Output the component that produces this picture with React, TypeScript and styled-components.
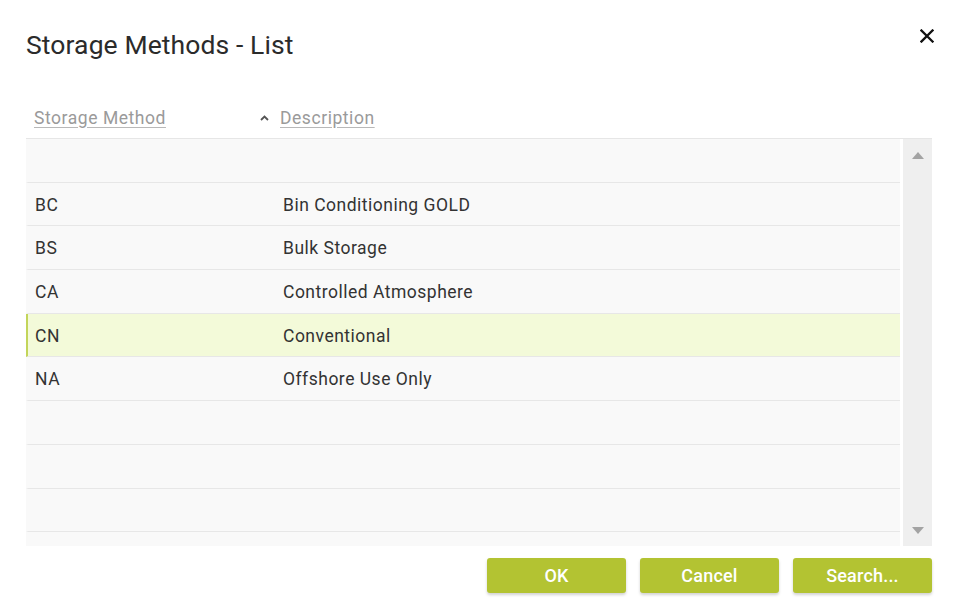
import React from "react";
import styled, { createGlobalStyle } from "styled-components";

const Global = createGlobalStyle`
  html, body { margin: 0; padding: 0; background: #ffffff; }
  body { font-family: Roboto, "Liberation Sans", Arial, sans-serif; }
  * { box-sizing: border-box; }
`;

const Dialog = styled.div`
  width: 958px;
  height: 605px;
  background: #ffffff;
  padding: 0 26px 0 26px;
  display: flex;
  flex-direction: column;
`;

const TitleBar = styled.div`
  display: flex;
  align-items: center;
  justify-content: space-between;
  height: 90px;
`;

const Title = styled.h1`
  margin: 0;
  font-size: 26.5px;
  font-weight: 400;
  color: #2b2b2b;
  letter-spacing: 0.1px;
  line-height: 1;
`;

const CloseButton = styled.button`
  border: none;
  background: none;
  padding: 0;
  width: 16px;
  height: 16px;
  margin-right: -3px;
  margin-top: -18px;
  display: flex;
  align-items: center;
  justify-content: center;
  cursor: pointer;
`;

const HeaderRow = styled.div`
  display: grid;
  grid-template-columns: 224px 1fr;
  align-items: center;
  height: 48px;
  padding-left: 8px;
  padding-top: 7px;
`;

const HeaderCell = styled.div`
  display: flex;
  align-items: center;
  gap: 10px;
`;

const HeaderLink = styled.a`
  font-size: 17.5px;
  letter-spacing: 0.55px;
  color: #9a9a9a;
  text-decoration: underline;
  text-underline-offset: 3px;
  text-decoration-color: #b8b8b8;
  cursor: pointer;
`;

const Caret = styled.span`
  width: 12px;
  display: inline-flex;
  justify-content: center;
`;

const TableWrap = styled.div`
  display: flex;
  border-top: 1px solid #e6e6e6;
  height: 408px;
`;

const Body = styled.div`
  flex: 1;
  overflow: hidden;
  background: #f8f8f8;
  margin-right: 3px;
`;

const Row = styled.div<{ $selected?: boolean }>`
  display: grid;
  grid-template-columns: 248px 1fr;
  align-items: center;
  height: 43.7px;
  border-bottom: 1px solid #e7e7e7;
  background: ${(p) => (p.$selected ? "#f3fad9" : "#f9f9f9")};
  border-left: 2px solid ${(p) => (p.$selected ? "#c3d55a" : "transparent")};
  padding-left: 7px;
  padding-top: 1px;
  font-size: 17.5px;
  letter-spacing: 0.5px;
  color: #333333;
`;

const Cell = styled.div`
  white-space: nowrap;
`;

const Scrollbar = styled.div`
  width: 29px;
  background: #efefef;
  display: flex;
  flex-direction: column;
  justify-content: space-between;
  align-items: center;
  padding: 13px 0 12px;
`;

const Footer = styled.div`
  display: flex;
  justify-content: flex-end;
  gap: 14px;
  padding-top: 12px;
`;

const Button = styled.button`
  width: 139px;
  height: 35px;
  border: none;
  border-radius: 3px;
  background: #b3c332;
  color: #ffffff;
  font-family: Roboto, "Liberation Sans", Arial, sans-serif;
  font-size: 18px;
  letter-spacing: 0.2px;
  font-weight: 500;
  box-shadow: 0 2px 3px rgba(0, 0, 0, 0.18);
  cursor: pointer;
`;

const rows: [string, string][] = [
  ["", ""],
  ["BC", "Bin Conditioning GOLD"],
  ["BS", "Bulk Storage"],
  ["CA", "Controlled Atmosphere"],
  ["CN", "Conventional"],
  ["NA", "Offshore Use Only"],
  ["", ""],
  ["", ""],
  ["", ""],
  ["", ""],
];

export default function App() {
  return (
    <>
      <Global />
      <Dialog>
        <TitleBar>
          <Title>Storage Methods - List</Title>
          <CloseButton aria-label="Close">
            <svg width="14" height="14" viewBox="0 0 14 14">
              <path d="M1.5 1.5 L12.5 12.5 M12.5 1.5 L1.5 12.5" stroke="#111" strokeWidth="2.3" strokeLinecap="square" />
            </svg>
          </CloseButton>
        </TitleBar>
        <HeaderRow>
          <HeaderCell>
            <HeaderLink>Storage Method</HeaderLink>
          </HeaderCell>
          <HeaderCell>
            <Caret>
              <svg width="9" height="6" viewBox="0 0 9 6">
                <path d="M1 5 L4.5 1.5 L8 5" stroke="#555" strokeWidth="1.8" fill="none" />
              </svg>
            </Caret>
            <HeaderLink>Description</HeaderLink>
          </HeaderCell>
        </HeaderRow>
        <TableWrap>
          <Body>
            {rows.map(([code, desc], i) => (
              <Row key={i} $selected={code === "CN"}>
                <Cell>{code}</Cell>
                <Cell>{desc}</Cell>
              </Row>
            ))}
          </Body>
          <Scrollbar>
            <svg width="12" height="7" viewBox="0 0 12 7">
              <path d="M0 7 L6 0 L12 7 Z" fill="#a3a3a3" />
            </svg>
            <svg width="12" height="7" viewBox="0 0 12 7">
              <path d="M0 0 L6 7 L12 0 Z" fill="#a3a3a3" />
            </svg>
          </Scrollbar>
        </TableWrap>
        <Footer>
          <Button>OK</Button>
          <Button>Cancel</Button>
          <Button>Search...</Button>
        </Footer>
      </Dialog>
    </>
  );
}
